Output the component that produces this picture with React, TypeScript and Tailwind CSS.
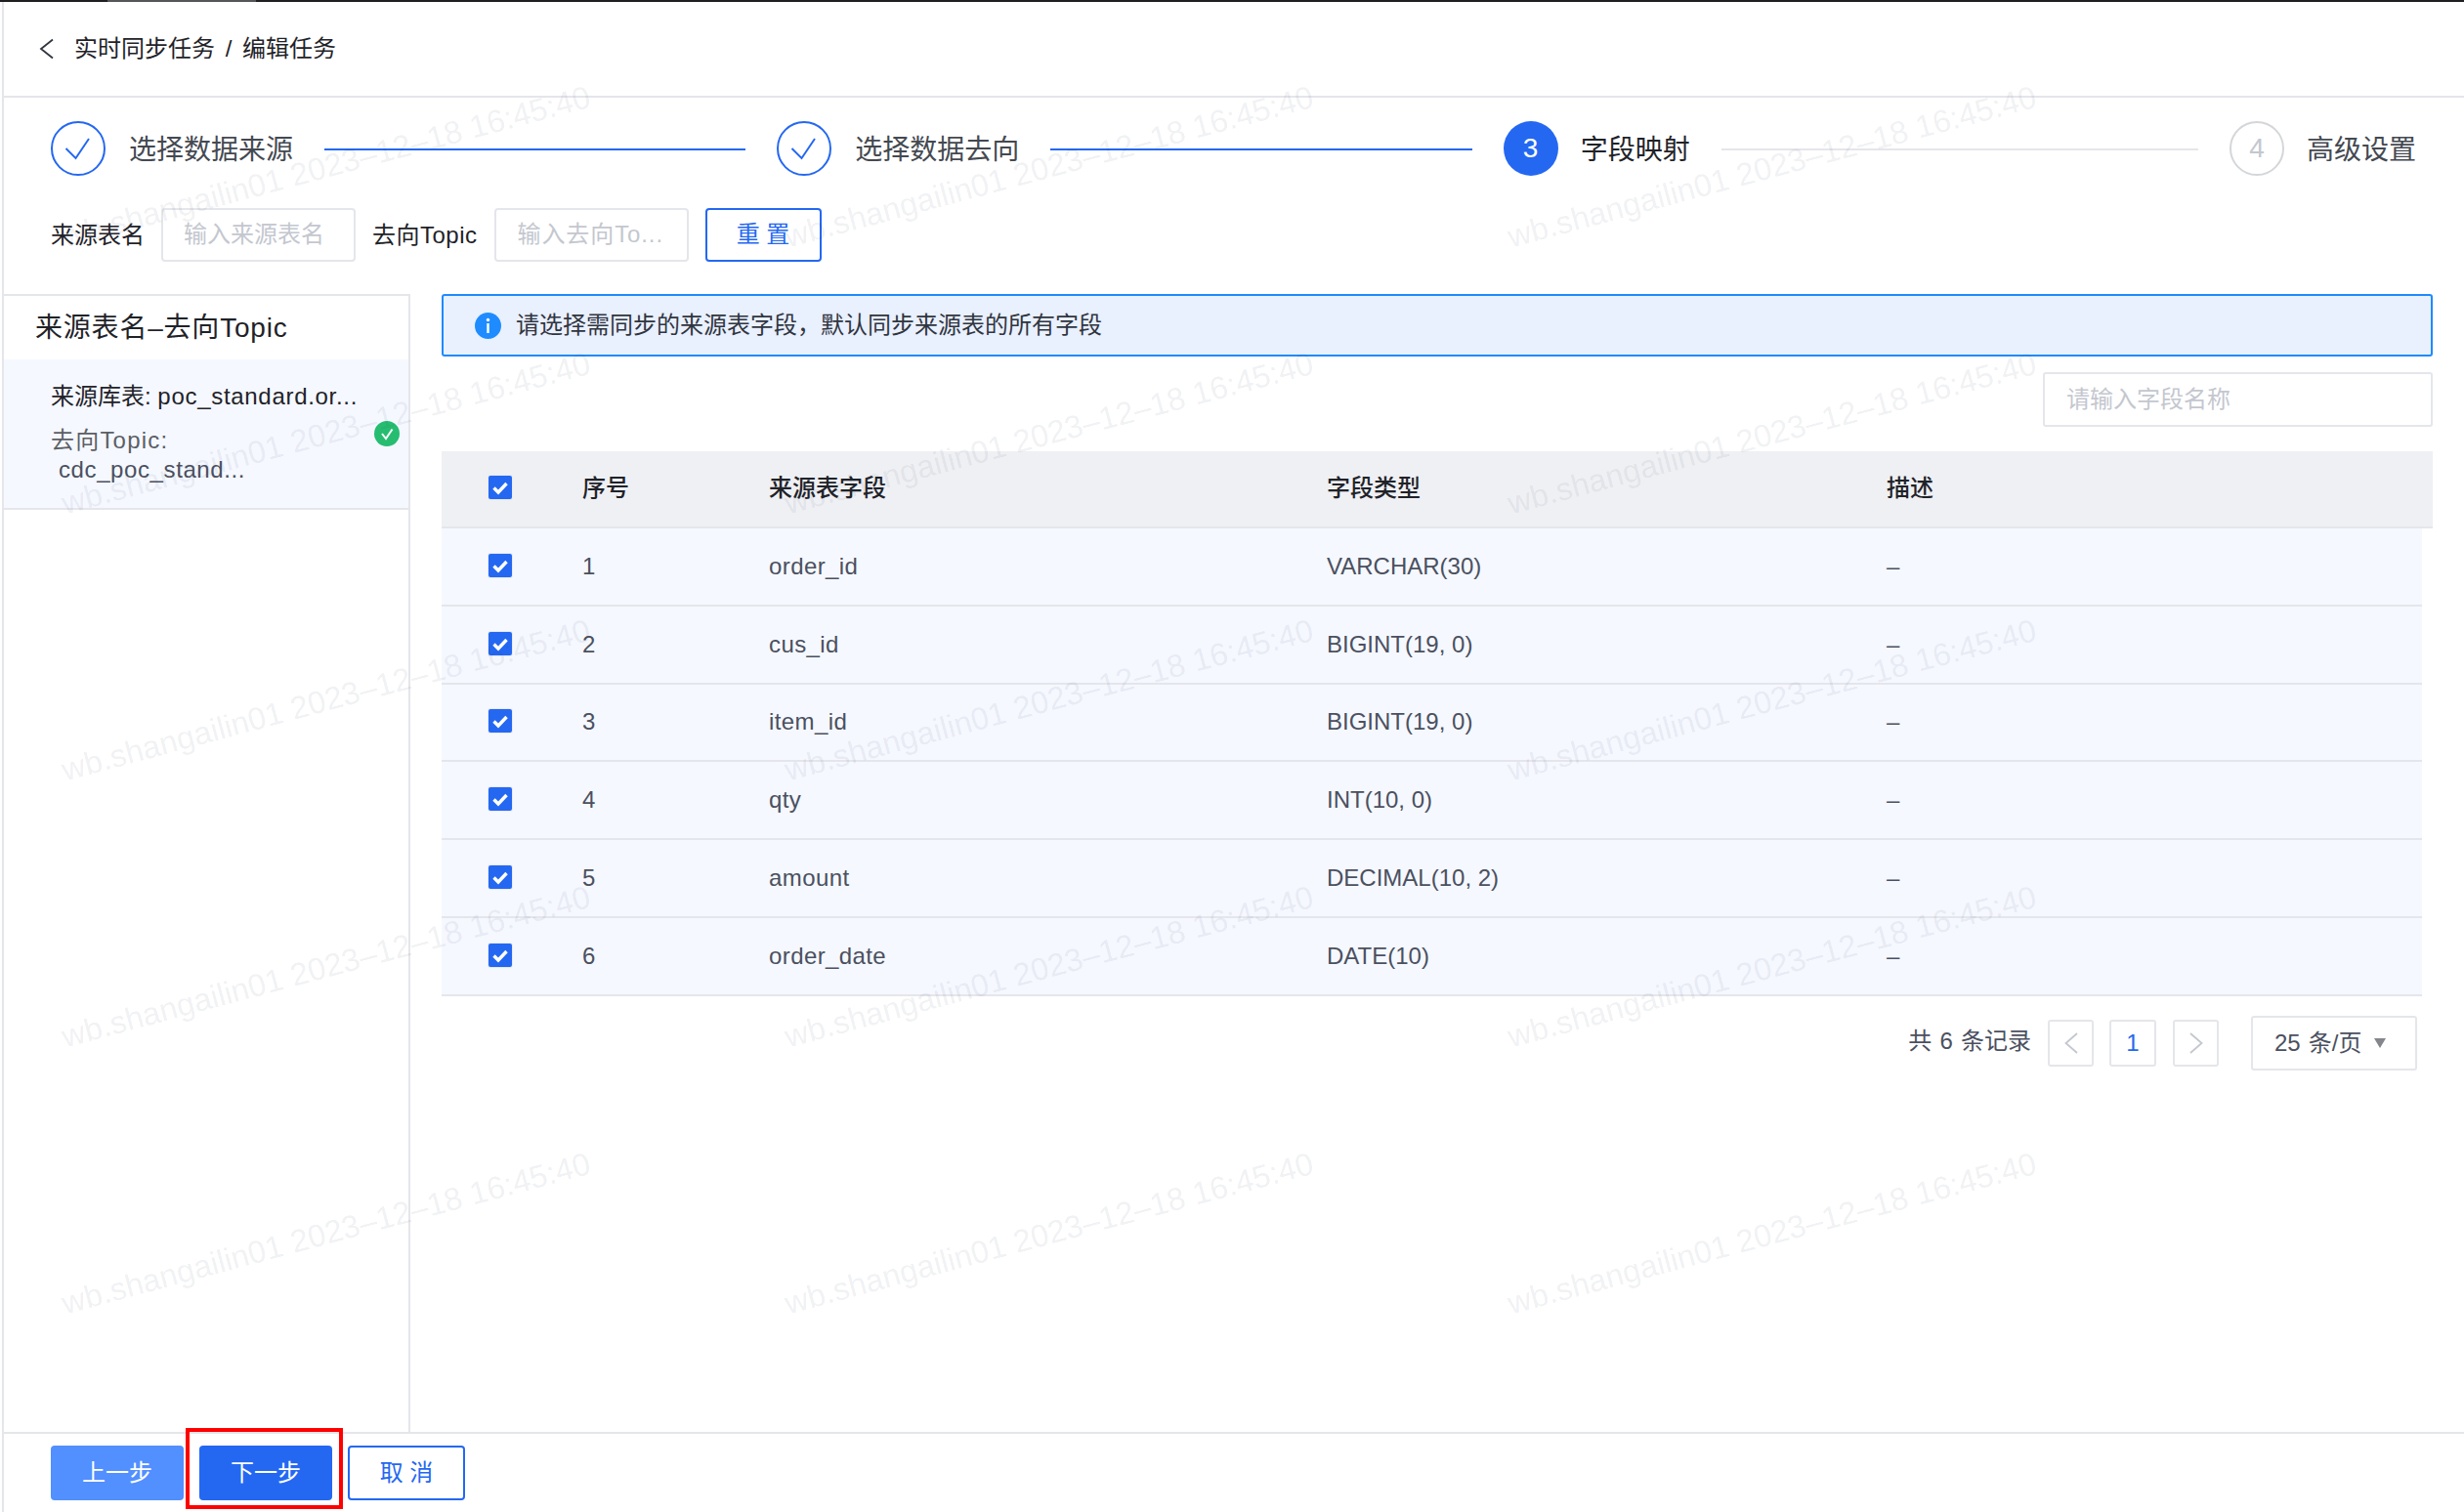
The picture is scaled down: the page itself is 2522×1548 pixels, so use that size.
import * as React from "react";

const STEPS = [
  { label: "选择数据来源", state: "done" },
  { label: "选择数据去向", state: "done" },
  { label: "字段映射", state: "active" },
  { label: "高级设置", state: "todo" },
];

const ROWS = [
  { id: 1, field: "order_id", type: "VARCHAR(30)" },
  { id: 2, field: "cus_id", type: "BIGINT(19, 0)" },
  { id: 3, field: "item_id", type: "BIGINT(19, 0)" },
  { id: 4, field: "qty", type: "INT(10, 0)" },
  { id: 5, field: "amount", type: "DECIMAL(10, 2)" },
  { id: 6, field: "order_date", type: "DATE(10)" },
];

const COLS = "grid grid-cols-[97px_191px_571px_573px_1fr] items-center pl-[47px]";

function Checkbox() {
  return (
    <span className="-mt-[2px] flex h-[26px] w-[26px] items-center justify-center rounded-[3px] border border-[#e8e9f1]">
      <span className="flex h-[24px] w-[24px] items-center justify-center rounded-[2px] bg-[#2468f2]">
        <svg viewBox="0 0 24 24" className="h-[24px] w-[24px]" fill="none">
          <path d="M5.5 12.5 L10 17 L18.5 8" stroke="#fff" strokeWidth="3.4" />
        </svg>
      </span>
    </span>
  );
}

function Step({ label, state, index, last }: { label: string; state: string; index: number; last: boolean }) {
  return (
    <div className={last ? "flex shrink-0 items-center" : "flex flex-1 basis-0 items-center"}>
      {state === "done" && (
        <span className="flex h-[56px] w-[56px] shrink-0 items-center justify-center rounded-full border-2 border-[#2468f2]">
          <svg viewBox="0 0 52 52" className="h-[52px] w-[52px]" fill="none">
            <path d="M13.5 26 L23.5 36 L37 16" stroke="#2468f2" strokeWidth="2" />
          </svg>
        </span>
      )}
      {state === "active" && (
        <span className="flex h-[56px] w-[56px] shrink-0 items-center justify-center rounded-full bg-[#2468f2] text-[28px] text-white">
          {index + 1}
        </span>
      )}
      {state === "todo" && (
        <span className="flex h-[56px] w-[56px] shrink-0 items-center justify-center rounded-full border-2 border-[#d4d6d9] text-[28px] text-[#c4c7cf]">
          {index + 1}
        </span>
      )}
      <span
        className={
          state === "done"
            ? "ml-[24px] mt-[3px] whitespace-nowrap text-[28px] leading-[40px] text-[#444951]"
            : state === "active"
              ? "ml-[23px] mt-[3px] whitespace-nowrap text-[28px] leading-[40px] text-[#1f2329]"
              : "ml-[23px] mt-[3px] whitespace-nowrap text-[28px] leading-[40px] text-[#444951]"
        }
      >
        {label}
      </span>
      {!last && (
        <span className={state === "done" ? "mx-[32px] mt-[2px] h-[2px] flex-1 bg-[#2468f2]" : "mx-[32px] mt-[2px] h-[2px] flex-1 bg-[#e5e6eb]"} />
      )}
    </div>
  );
}

function Watermarks() {
  const cells = Array.from({ length: 15 });
  return (
    <div className="pointer-events-none absolute inset-0 grid grid-cols-[repeat(3,740px)] auto-rows-[273px] overflow-hidden pl-[64px] pt-[223px]">
      {cells.map((_, i) => (
        <div key={i} className="h-[40px]">
          <span className="block origin-left -rotate-[15deg] whitespace-nowrap text-[32.5px] leading-[40px] text-[#2a3350]/[0.08]">
            wb.shangailin01 2023–12–18 16:45:40
          </span>
        </div>
      ))}
    </div>
  );
}

export default function App() {
  return (
    <div className="relative flex h-[1548px] w-full flex-col overflow-hidden bg-white font-['Liberation_Sans','Noto_Sans_CJK_SC',sans-serif] text-[24px] text-[#1f2329]">
      <div className="flex h-[2px] shrink-0 bg-[#1f1f21]">
        <div className="w-[110px]" />
        <div className="w-[152px] bg-[#55565a]" />
      </div>

      <div className="ml-[2px] flex min-h-0 flex-1 flex-col border-l-2 border-[#e5e6eb]">
        {/* breadcrumb */}
        <div className="flex h-[98px] shrink-0 items-center border-b-2 border-[#e5e6eb] pl-[36px]">
          <svg viewBox="0 0 16 22" className="h-[22px] w-[16px]" fill="none">
            <path d="M14 1.5 L2 11 L14 20.5" stroke="#303540" strokeWidth="1.8" />
          </svg>
          <span className="ml-[20px] text-[#1f2329] [word-spacing:4px]">实时同步任务 / 编辑任务</span>
        </div>

        {/* steps */}
        <div className="mt-[24px] flex shrink-0 items-center pl-[48px] pr-[49px]">
          {STEPS.map((s, i) => (
            <Step key={s.label} label={s.label} state={s.state} index={i} last={i === STEPS.length - 1} />
          ))}
        </div>

        {/* filters */}
        <div className="mt-[32px] flex h-[56px] shrink-0 items-center pl-[48px]">
          <span className="mt-[1px] whitespace-nowrap">来源表名</span>
          <input
            placeholder="输入来源表名"
            className="ml-[17px] h-[55px] w-[199px] rounded-[4px] border-2 border-[#e5e6eb] bg-transparent pl-[21px] outline-none placeholder:text-[#c4c7cf]"
          />
          <span className="ml-[17px] mt-[1px] whitespace-nowrap tracking-[0.5px]">去向Topic</span>
          <input
            placeholder="输入去向To..."
            className="ml-[17px] h-[55px] w-[199px] rounded-[4px] border-2 border-[#e5e6eb] bg-transparent pl-[22px] tracking-[0.9px] outline-none placeholder:text-[#c4c7cf]"
          />
          <button className="ml-[17px] h-[55px] w-[119px] rounded-[4px] border-2 border-[#2468f2] text-[#2468f2]">重 置</button>
        </div>

        {/* body */}
        <div className="mt-[33px] flex min-h-0 flex-1">
          <div className="w-[416px] shrink-0 border-r-2 border-t-2 border-[#e5e6eb]">
            <div className="flex h-[65px] items-center pl-[32px] text-[28px] tracking-[0.8px]">来源表名–去向Topic</div>
            <div className="relative h-[154px] border-b-2 border-[#e5e6eb] bg-[#f5f8ff] pl-[48px]">
              <div className="whitespace-nowrap pt-[21px] leading-[34px]">
                来源库表: <span className="tracking-[0.7px]">poc_standard.or...</span>
              </div>
              <div className="mt-[11px] leading-[34px] tracking-[1.2px] text-[#5c5f66]">去向Topic:</div>
              <div className="-mt-[4px] pl-[8px] leading-[34px] tracking-[0.6px] text-[#4b5060]">cdc_poc_stand...</div>
              <span className="absolute left-[379px] top-[63px] flex h-[26px] w-[26px] items-center justify-center rounded-full bg-[#26bd71]">
                <svg viewBox="0 0 26 26" className="h-[26px] w-[26px]" fill="none">
                  <path d="M8 13 L12 18 L18.5 8.5" stroke="#fff" strokeWidth="2" />
                </svg>
              </span>
            </div>
          </div>

          <div className="min-w-0 flex-1 pl-[32px] pr-[32px]">
            <div className="flex h-[64px] items-center rounded-[3px] border-2 border-[#1e8bff] bg-[#e9f0fe] pl-[32px]">
              <svg viewBox="0 0 27 27" className="h-[27px] w-[27px]">
                <circle cx="13.5" cy="13.5" r="13.5" fill="#1e8cff" />
                <circle cx="13.5" cy="7.5" r="1.7" fill="#fff" />
                <rect x="12.3" y="11" width="2.4" height="10" fill="#fff" />
              </svg>
              <span className="ml-[15px] text-[#303540]">请选择需同步的来源表字段，默认同步来源表的所有字段</span>
            </div>

            <div className="mt-[16px] flex justify-end">
              <input
                placeholder="请输入字段名称"
                className="h-[56px] w-[399px] rounded-[3px] border-2 border-[#e5e6eb] bg-transparent pl-[22px] outline-none placeholder:text-[#c4c7cf]"
              />
            </div>

            {/* table */}
            <div className={`${COLS} mt-[25px] h-[79px] border-b-2 border-[#e5e6eb] bg-[#eff0f4] pb-[2px] font-medium text-[#1f2329]`}>
              <Checkbox />
              <span>序号</span>
              <span>来源表字段</span>
              <span>字段类型</span>
              <span>描述</span>
            </div>
            <div className="mr-[11px]">
              {ROWS.map((r) => (
                <div key={r.id} className={`${COLS} h-[79.8px] border-b-2 border-[#e5e6eb] bg-[#f5f8ff] text-[#4b5060]`}>
                  <Checkbox />
                  <span>{r.id}</span>
                  <span className="tracking-[0.4px]">{r.field}</span>
                  <span>{r.type}</span>
                  <span>–</span>
                </div>
              ))}
            </div>

            {/* pagination */}
            <div className="mr-[16px] mt-[20px] flex items-center justify-end text-[#4b5060]">
              <span className="-mt-[4px] whitespace-nowrap [word-spacing:1.5px]">共 6 条记录</span>
              <span className="ml-[17px] flex h-[48px] w-[47px] items-center justify-center rounded-[3px] border-2 border-[#e5e6eb]">
                <svg viewBox="0 0 14 22" className="h-[22px] w-[14px]" fill="none">
                  <path d="M13 1 L1.5 11 L13 21" stroke="#c4c7cf" strokeWidth="1.8" />
                </svg>
              </span>
              <span className="ml-[16px] flex h-[48px] w-[48px] items-center justify-center rounded-[3px] border-2 border-[#e5e6eb] text-[#2468f2]">1</span>
              <span className="ml-[17px] flex h-[48px] w-[47px] items-center justify-center rounded-[3px] border-2 border-[#e5e6eb]">
                <svg viewBox="0 0 14 22" className="h-[22px] w-[14px]" fill="none">
                  <path d="M1 1 L12.5 11 L1 21" stroke="#c4c7cf" strokeWidth="1.8" />
                </svg>
              </span>
              <span className="ml-[33px] flex h-[56px] w-[170px] items-center rounded-[3px] border-2 border-[#e5e6eb] pl-[22px]">
                <span className="whitespace-nowrap [word-spacing:1.5px]">25 条/页</span>
                <svg viewBox="0 0 12 10" className="ml-[12px] h-[10px] w-[12px]">
                  <path d="M0 0 H12 L6 10 Z" fill="#84868c" />
                </svg>
              </span>
            </div>
          </div>
        </div>

        {/* footer */}
        <div className="flex h-[82px] shrink-0 items-start gap-[16px] border-t-2 border-[#e5e6eb] pl-[48px] pt-[12px]">
          <button className="h-[56px] w-[136px] rounded-[4px] bg-[#528fff] text-white">上一步</button>
          <button className="h-[56px] w-[136px] rounded-[4px] bg-[#2468f2] text-white">下一步</button>
          <button className="h-[56px] w-[120px] rounded-[4px] border-2 border-[#2468f2] text-[#2468f2]">取 消</button>
        </div>
      </div>

      <Watermarks />

      {/* annotation drawn on the screenshot */}
      <div className="pointer-events-none absolute left-[190px] top-[1462px] h-[83px] w-[161px] border-4 border-[#ff0000]" />
    </div>
  );
}
